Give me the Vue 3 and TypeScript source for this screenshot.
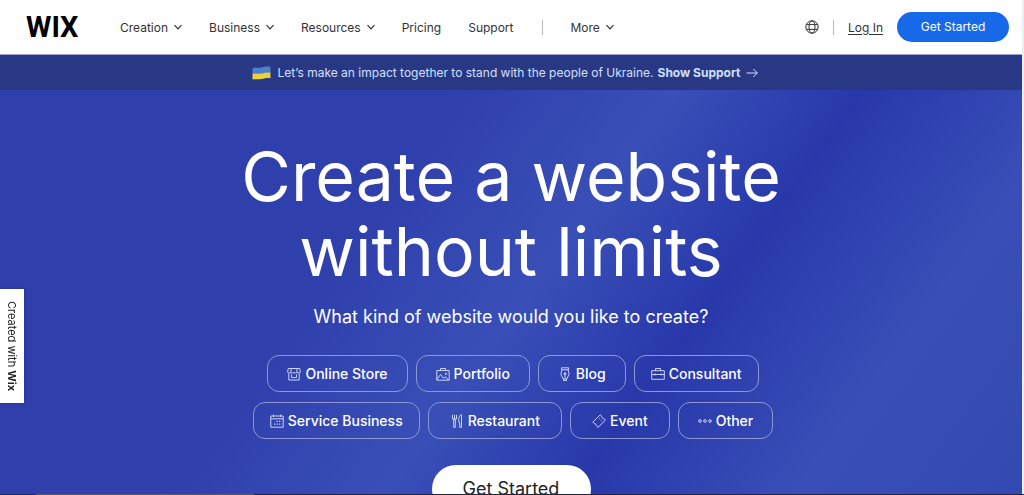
<script setup lang="ts">
interface NavItem {
  label: string
  menu: boolean
}

interface Category {
  label: string
  icon: string
  size: 'snug' | 'regular' | 'wide'
}

const navItems: NavItem[] = [
  { label: 'Creation', menu: true },
  { label: 'Business', menu: true },
  { label: 'Resources', menu: true },
  { label: 'Pricing', menu: false },
  { label: 'Support', menu: false },
]

const categoryRows: Category[][] = [
  [
    { label: 'Online Store', icon: 'store', size: 'regular' },
    { label: 'Portfolio', icon: 'portfolio', size: 'regular' },
    { label: 'Blog', icon: 'pen', size: 'regular' },
    { label: 'Consultant', icon: 'briefcase', size: 'snug' },
  ],
  [
    { label: 'Service Business', icon: 'calendar', size: 'snug' },
    { label: 'Restaurant', icon: 'cutlery', size: 'wide' },
    { label: 'Event', icon: 'ticket', size: 'wide' },
    { label: 'Other', icon: 'dots', size: 'regular' },
  ],
]
</script>

<template>
  <div class="page">
    <header class="header">
      <a class="logo" href="#">WIX</a>
      <nav class="nav">
        <template v-for="item in navItems" :key="item.label">
          <button v-if="item.menu" class="nav-item" type="button">
            {{ item.label }}
            <svg class="chevron" viewBox="0 0 8 6" aria-hidden="true"><path d="M.5 1.200 4 4.800l3.500-3.600" /></svg>
          </button>
          <a v-else class="nav-item" href="#">{{ item.label }}</a>
        </template>
        <span class="divider"></span>
        <button class="nav-item" type="button">
          More
          <svg class="chevron" viewBox="0 0 8 6" aria-hidden="true"><path d="M.5 1.200 4 4.800l3.500-3.600" /></svg>
        </button>
      </nav>
      <div class="account">
        <button class="language" type="button" aria-label="Language">
          <svg viewBox="0 0 14 14" aria-hidden="true">
            <circle cx="7" cy="7" r="6.200" />
            <ellipse cx="7" cy="7" rx="3" ry="6.200" />
            <path d="M1.400 4.600h11.200M1.400 9.400h11.200" />
          </svg>
        </button>
        <span class="divider"></span>
        <a class="login" href="#">Log In</a>
        <a class="start" href="#">Get Started</a>
      </div>
    </header>

    <div class="banner">
      <svg class="flag" viewBox="0 0 19 14" aria-hidden="true">
        <path fill="#4a7fc9" d="M.5 2.200C4 .2 6 2.600 9.500 1.600S15 .3 18.500.8V7C15 6.400 13 7.400 9.500 8S4 7.200.5 8.200Z" />
        <path fill="#e9d03c" d="M.5 7.800C4 6.800 6 8.200 9.500 7.600S15 6.200 18.500 6.800v5.400c-3.500-.6-5.500.2-9 .9s-5.500-.5-9 .5Z" />
      </svg>
      <span>Let’s make an impact together to stand with the people of Ukraine.</span>
      <a class="support" href="#">
        Show Support
        <svg class="arrow" viewBox="0 0 12 10" aria-hidden="true"><path d="M.5 5h10.800M7.300 1l4 4-4 4" /></svg>
      </a>
    </div>

    <main class="hero">
      <h1>Create a website<br />without limits</h1>
      <p>What kind of website would you like to create?</p>
      <div class="categories">
        <div v-for="(row, index) in categoryRows" :key="index" class="row">
          <button v-for="item in row" :key="item.label" type="button" class="category" :class="item.size">
            <svg class="icon" viewBox="0 0 14 14" aria-hidden="true">
              <g v-if="item.icon === 'store'">
                <path d="M1.300 1.500h11.400l.7 3.500c0 1.500-3.200 1.500-3.200 0 0 1.500-3.200 1.500-3.200 0 0 1.500-3.200 1.500-3.200 0 0 1.500-3.200 1.500-3.200 0zM3.800 5l.5-3.500M10.200 5l-.5-3.500" />
                <path d="M1.800 6.500V13h10.400V6.500M4.500 7.500v3h5v-3" />
              </g>
              <g v-else-if="item.icon === 'portfolio'">
                <path d="M.8 3.500h12.400v9.700H.8zM4.500 3.500v-2h5v2M1 12.500l3.500-5 3 3.800 1.500-1.500 3.500 3" />
                <circle cx="10" cy="6.800" r=".7" />
              </g>
              <g v-else-if="item.icon === 'pen'">
                <path d="M3.500.8h7v2h-7zM4 2.800 2.800 7 5.200 12h3.600l2.400-5L10 2.800M5.500 12v1.500h3V12M7 5.500V12" />
                <circle cx="7" cy="6.800" r="1" />
              </g>
              <g v-else-if="item.icon === 'briefcase'">
                <path d="M.7 3.700h12.600v8.600H.7zM4.500 3.700v-2.200h5v2.200M.7 7.500h12.600M4 6.500v2M10 6.500v2" />
              </g>
              <g v-else-if="item.icon === 'calendar'">
                <path d="M.8 2h12.400v11.200H.8zM.8 4.800h12.400M3.500.5V3M10.500.5V3" />
                <path class="solid" d="M6.500 6.800h1.300v1.300H6.500zM9 6.800h1.300v1.300H9zM4 9.500h1.300v1.300H4zM6.500 9.500h1.300v1.300H6.500zM9 9.500h1.300v1.300H9z" />
              </g>
              <g v-else-if="item.icon === 'cutlery'">
                <path d="M2.500.8V5h4V.8M4.500.8V5M3.700 5v8.300h1.600V5M9 8.500c-.8-4 .1-7.700 2.500-7.700v12.500H9.700V8.500z" />
              </g>
              <g v-else-if="item.icon === 'ticket'">
                <path d="M8.200.8 10 2.600c-.4 1.400.6 2.200 1.700 1.800l1.700 1.700-7.400 7.300-1.800-1.800c.4-1.300-.6-2.200-1.800-1.800L.8 8.200zM7.200 4.500l.9.900M9 6.300l.9.900" />
              </g>
              <g v-else>
                <circle cx="2" cy="7" r="1.300" />
                <circle cx="7" cy="7" r="1.300" />
                <circle cx="12" cy="7" r="1.300" />
              </g>
            </svg>
            {{ item.label }}
          </button>
        </div>
      </div>
      <a class="cta" href="#">Get Started</a>
    </main>

    <a class="side-tab" href="#"><span>Created with <b>Wix</b></span></a>
    <div class="status-edge"></div>
  </div>
</template>

<style>
body {
  margin: 0;
  background: #2f3fac;
}
</style>

<style scoped>
.page {
  box-sizing: border-box;
  display: flex;
  flex-direction: column;
  height: 100vh;
  overflow: hidden;
  border-right: 2px solid #eceef5;
  font-family: Inter, "Liberation Sans", sans-serif;
}

a {
  color: inherit;
  text-decoration: none;
}

button {
  margin: 0;
  padding: 0;
  border: 0;
  background: none;
  color: inherit;
  font: inherit;
}

svg {
  fill: none;
  stroke: currentColor;
}

.header {
  box-sizing: border-box;
  display: flex;
  flex: none;
  align-items: center;
  height: 55px;
  padding: 0 13px 0 26px;
  border-bottom: 1px solid #9da3c6;
  background: #fff;
  color: #333;
  font-size: 12px;
}

.logo {
  width: 94px;
  color: #000;
  font-family: Roboto, "Liberation Sans", sans-serif;
  font-size: 29px;
  font-weight: 700;
}

.nav {
  display: flex;
  align-items: center;
  gap: 27px;
}

.nav-item {
  display: flex;
  align-items: center;
  gap: 6px;
}

.chevron {
  width: 8px;
  height: 6px;
  stroke-width: 1.2;
}

.divider {
  width: 1px;
  height: 15px;
  background: #bbb;
}

.nav .divider {
  margin: 0 1px;
}

.account {
  display: flex;
  align-items: center;
  gap: 14px;
  margin-left: auto;
}

.language svg {
  display: block;
  width: 14px;
  height: 14px;
}

.login {
  text-decoration: underline;
  text-underline-offset: 2px;
}

.start {
  width: 112px;
  border-radius: 15px;
  background: #166aea;
  color: #fff;
  line-height: 30px;
  text-align: center;
}

.banner {
  display: flex;
  flex: none;
  align-items: center;
  justify-content: center;
  height: 35px;
  padding-right: 12px;
  background: #293885;
  color: #d0e0fc;
  font-size: 12px;
}

.flag {
  width: 19px;
  height: 14px;
  margin-right: 7px;
  stroke: none;
}

.support {
  display: flex;
  align-items: center;
  gap: 6px;
  margin-left: 4px;
  font-weight: 700;
}

.arrow {
  width: 12px;
  height: 10px;
}

.hero {
  display: flex;
  flex: 1 0 auto;
  flex-direction: column;
  align-items: center;
  padding-top: 49px;
  background: linear-gradient(126deg, #2f3fac 0%, #2f3fac 34%, #394fb7 51%, #2838aa 65%, #394fb7 82%, #3349b2 100%);
  color: #fff;
}

h1 {
  margin: 0;
  font-size: 68px;
  font-weight: 400;
  line-height: 75px;
  text-align: center;
}

p {
  margin: 16px 0 0;
  font-size: 18px;
  line-height: 24px;
}

.categories {
  display: flex;
  flex-direction: column;
  gap: 10px;
  margin-top: 26px;
  padding-left: 4px;
}

.row {
  display: flex;
  justify-content: center;
  gap: 8px;
}

.category {
  box-sizing: border-box;
  display: flex;
  align-items: center;
  gap: 4px;
  height: 37px;
  border: 1px solid #8c98d5;
  border-radius: 12px;
  font-size: 14px;
  font-weight: 500;
}

.snug {
  padding: 0 16px;
}

.regular {
  padding: 0 19px;
}

.wide {
  padding: 0 21px;
}

.icon {
  width: 14px;
  height: 14px;
  color: #c9d3f8;
}

.solid {
  fill: currentColor;
  stroke: none;
}

.cta {
  width: 159px;
  margin-top: 26px;
  border-radius: 24px;
  background: #fff;
  color: #222;
  font-size: 18px;
  line-height: 48px;
  text-align: center;
}

.side-tab {
  position: fixed;
  top: 289px;
  left: 0;
  display: flex;
  align-items: center;
  justify-content: center;
  width: 24px;
  height: 114px;
  background: #fff;
  box-shadow: 0 0 3px #26358f;
  color: #222;
  font-size: 11px;
  writing-mode: vertical-rl;
}

.status-edge {
  position: fixed;
  right: 0;
  bottom: 0;
  left: 0;
  height: 1px;
  background: linear-gradient(90deg, #1d285c 36px, #56596b 36px, #56596b 254px, #22263d 254px);
}
</style>
